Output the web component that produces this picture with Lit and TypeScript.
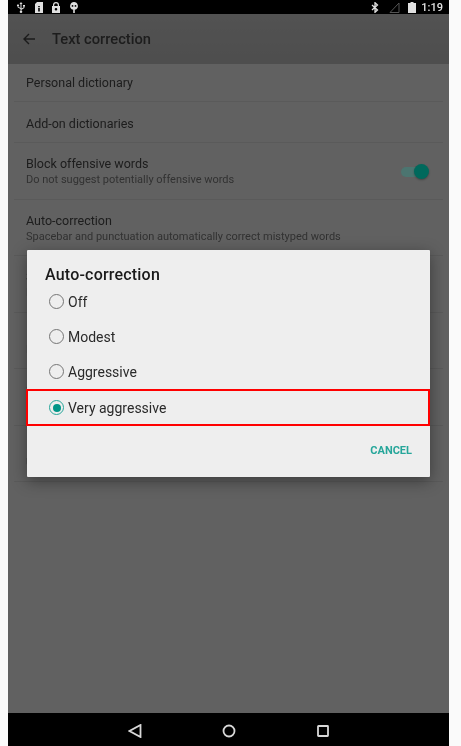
import { LitElement, html, css } from "lit";
import { customElement } from "lit/decorators.js";

const rows: [string, string?][] = [
  ["Personal dictionary"],
  ["Add-on dictionaries"],
  ["Block offensive words", "Do not suggest potentially offensive words"],
  ["Auto-correction", "Spacebar and punctuation automatically correct mistyped words"],
  ["Show correction suggestions", "Display suggested words while typing"],
  ["Personalized suggestions", "Learn from your communications and typed data"],
  ["Suggest Contact names", "Use names from Contacts for suggestions"],
  ["Next-word suggestions", "Use the previous word in making suggestions"],
];
const options = ["Off", "Modest", "Aggressive", "Very aggressive"];

@customElement("app-root")
export class AppRoot extends LitElement {
  static styles = css`
    :host { display: block; width: 461px; height: 746px; background: #fafafa; font-family: Roboto, sans-serif; overflow: hidden; }
    .device { position: relative; width: 441px; height: 746px; margin-left: 8px; display: flex; flex-direction: column; background: #f5f5f5; overflow: hidden; filter: blur(.3px); }
    .status { height: 14px; flex: none; background: #000; display: flex; align-items: center; padding: 0 6px 0 8px; color: #e4e4e4; position: relative; z-index: 3; }
    .status svg { display: block; fill: #e0e0e0; }
    .status-left { display: flex; gap: 7.7px; align-items: center; }
    .status-right { margin-left: auto; display: flex; align-items: center; }
    .bt { fill: none !important; stroke: #e0e0e0; stroke-width: 1.3; }
    .signal { margin-left: 10px; fill: none !important; stroke: #555; stroke-width: 1; }
    .battery { margin-left: 8px; }
    .time { font-size: 11px; font-weight: 500; margin-left: 5px; }
    .appbar { height: 50px; flex: none; background: linear-gradient(#cfcfcf, #c4c4c4); display: flex; align-items: center; padding-left: 15px; gap: 17px; color: #4a4a4a; font-size: 14.7px; font-weight: 500; padding-bottom: 1px; box-sizing: border-box; }
    .arrow { fill: none; stroke: #444; stroke-width: 1.4; }
    .list { flex: 1; }
    .row { margin: 0 6px; padding: 3px 12px 0; display: flex; flex-direction: column; justify-content: center; height: 56.5px; box-sizing: border-box; border-bottom: 1px solid #e4e4e4; position: relative; }
    .row.short { height: 38px; padding-top: 0; }
    .row.short + .row.short { height: 41px; padding-top: 3px; }
    .title { font-size: 12.5px; color: #4a4a4a; line-height: 16px; }
    .sub { font-size: 11px; color: #7d7d7d; line-height: 16px; }
    .switch { position: absolute; right: 19px; top: 24px; width: 23px; height: 10px; border-radius: 5px; background: #4c7570; z-index: 2; }
    .switch::after { content: ""; position: absolute; right: -5px; top: -3px; width: 15px; height: 15px; border-radius: 50%; background: #00695c; box-shadow: 0 1px 2px rgba(0,0,0,.3); }
    .scrim { position: absolute; inset: 14px 0 33px 0; background: rgba(0,0,0,.605); z-index: 1; }
    .nav { height: 33px; flex: none; background: #000; display: flex; align-items: center; justify-content: center; position: relative; z-index: 3; gap: 80px; padding-top: 3px; box-sizing: border-box; }
    .nav svg { display: block; fill: none; stroke: #d8d8d8; stroke-width: 1.8; }
    .dialog { position: absolute; left: 19px; top: 250px; width: 403px; height: 227px; background: #eee; z-index: 2; box-shadow: 0 4px 16px rgba(0,0,0,.4); border-radius: 1px; display: flex; flex-direction: column; box-sizing: border-box; padding-top: 16px; }
    .dlg-title { font-size: 16px; font-weight: 500; color: #1a1a1a; padding-left: 18px; line-height: 18px; letter-spacing: .2px; }
    .opt { height: 35px; display: flex; align-items: center; padding-left: 22px; gap: 4px; font-size: 14px; color: #2a2a2a; box-sizing: border-box; }
    .opt-label { padding-top: 1px; }
    .opt.sel { height: 37px; margin-left: -1px; padding-left: 21px; border: 2px solid #f00; }
    .radio { width: 15px; height: 15px; border: 1.5px solid #757575; border-radius: 50%; box-sizing: border-box; flex: none; display: flex; align-items: center; justify-content: center; }
    .sel .radio { border-color: #26a69a; }
    .sel .radio::after { content: ""; width: 8px; height: 8px; border-radius: 50%; background: #009688; }
    .actions { flex: 1; display: flex; align-items: center; justify-content: flex-end; padding: 0 18px 2px 0; font-size: 11px; font-weight: 700; color: #26a69a; }
  `;

  render() {
    return html`<div class="device">
      <div class="status">
        <div class="status-left">
          <svg width="10" height="11" viewBox="0 0 10 11"><path d="M5 0 6.500 2H5.500V6.600L7.500 5.400V4.500H7V3H9V4.500H8.400V5.900L5.500 7.700V8.700A1.200 1.200 0 1 1 4.500 8.700V7L1.600 5.200V4.300A1 1 0 1 1 2.400 4.300V4.800L4.500 6V2H3.500Z"/></svg>
          <svg width="10" height="11" viewBox="0 0 10 11"><path d="M3 0H9V11H1V2ZM4.200 4V5.200H5.800V4ZM4.200 6V9.500H5.800V6Z" fill-rule="evenodd"/></svg>
          <svg width="10" height="11" viewBox="0 0 10 11"><path fill-rule="evenodd" d="M1 4H2V3A3 3 0 0 1 8 3V4H9V11H1ZM3.200 4H6.800V3A1.800 1.800 0 0 0 3.200 3ZM5 6A1.300 1.300 0 1 0 5 8.600 1.300 1.300 0 0 0 5 6Z"/></svg>
          <svg width="10" height="11" viewBox="0 0 10 11"><path fill-rule="evenodd" d="M5 0A4 4 0 0 1 7 7.400H5.800V11H4.200V7.400H3A4 4 0 0 1 5 0ZM3.500 3A.9 .9 0 1 0 3.500 4.800 .9 .9 0 0 0 3.500 3ZM6.500 3A.9 .9 0 1 0 6.500 4.800 .9 .9 0 0 0 6.500 3Z"/></svg>
        </div>
        <div class="status-right">
          <svg class="bt" width="8" height="11" viewBox="0 0 8 11"><path d="M1 3 6.500 8 4 10.300V.7L6.500 3 1 8"/></svg>
          <svg class="signal" width="11" height="11" viewBox="0 0 11 11"><path d="M1 10.500H10V1Z"/></svg>
          <svg class="battery" width="8" height="11" viewBox="0 0 8 11"><path d="M2.500 0H5.500V1H8V11H0V1H2.500Z"/></svg>
          <span class="time">1:19</span>
        </div>
      </div>
      <div class="appbar">
        <svg class="arrow" width="12" height="12" viewBox="0 0 12 12"><path d="M12 6H1M6 1 1 6l5 5"/></svg>
        <span>Text correction</span>
      </div>
      <div class="list">
        ${rows.map(([t, s]) => html`<div class="row ${s ? "" : "short"}">
          <div class="title">${t}</div>
          ${s ? html`<div class="sub">${s}</div>` : ""}
          ${t.startsWith("Block") ? html`<div class="switch"></div>` : ""}
        </div>`)}
      </div>
      <div class="nav">
        <svg width="14" height="14" viewBox="0 0 14 14"><path d="M12.500 1V13L1.500 7Z"/></svg>
        <svg width="14" height="14" viewBox="0 0 14 14"><circle cx="7" cy="7" r="5.500"/></svg>
        <svg width="14" height="14" viewBox="0 0 14 14"><rect x="2" y="2" width="10" height="10" rx=".5"/></svg>
      </div>
      <div class="scrim"></div>
      <div class="dialog">
        <div class="dlg-title">Auto-correction</div>
        ${options.map((o, i) => html`<div class="opt ${i === 3 ? "sel" : ""}"><span class="radio"></span><span class="opt-label">${o}</span></div>`)}
        <div class="actions">CANCEL</div>
      </div>
    </div>`;
  }
}
